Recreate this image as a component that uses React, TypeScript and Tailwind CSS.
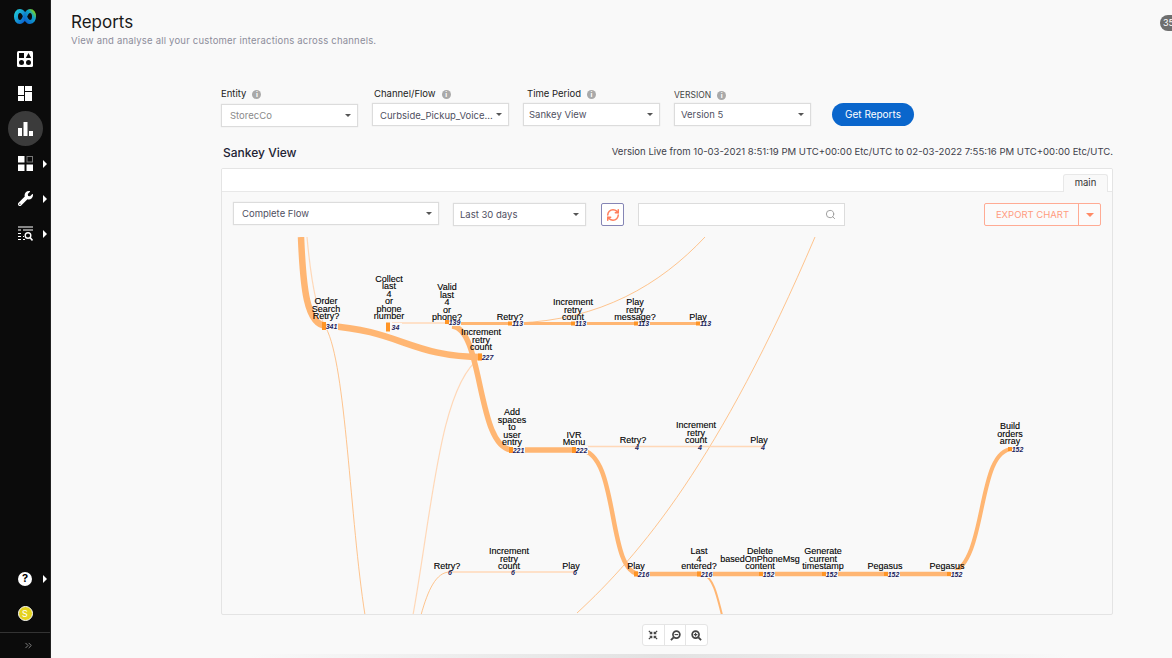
import { ChevronsRight, RefreshCw, Search } from 'lucide-react';
import { FaWrench } from 'react-icons/fa';

const sans = 'font-["Inter",sans-serif]';

function Caret({ className = 'border-t-[#555]' }: { className?: string }) {
  return <span className={`h-0 w-0 shrink-0 border-x-[3px] border-t-[3px] border-x-transparent ${className}`} />;
}

function Info() {
  return (
    <span className="flex h-[9px] w-[9px] items-center justify-center rounded-full bg-[#a9a9a9] text-[7px] font-bold leading-none text-white">
      i
    </span>
  );
}

function Select({ value, className, muted, textClass = '' }: { value: string; className: string; muted?: boolean; textClass?: string }) {
  return (
    <div
      className={`flex h-[23px] items-center justify-between border border-[#dcdcdc] bg-white pr-[6px] text-[9.5px] shadow-[0_0_1px_#ddd] ${muted ? 'text-[#8a8a8a]' : 'text-[#50505f]'} ${className}`}
    >
      <span className={`whitespace-nowrap ${textClass}`}>{value}</span>
      <Caret />
    </div>
  );
}

function Filter(props: { label: string; value: string; muted?: boolean; upper?: boolean; labelPad: string; textPad: string; textClass?: string }) {
  const { label, value, muted, upper, labelPad, textPad, textClass } = props;
  return (
    <div className="w-[137px]">
      <div className={`mb-[3px] flex h-[12px] items-center gap-[6px] ${labelPad} ${upper ? 'translate-y-[1px] text-[8.5px] text-[#444]' : 'text-[9.5px] text-[#222]'}`}>
        {label}
        <Info />
      </div>
      <Select value={value} muted={muted} textClass={textClass} className={`w-[137px] ${textPad}`} />
    </div>
  );
}

function SideItem({ children, arrow, active }: { children: React.ReactNode; arrow?: boolean; active?: boolean }) {
  return (
    <div className="relative flex h-[35px] w-full items-center justify-center">
      <div className={`flex h-[35px] w-[35px] items-center justify-center rounded-full ${active ? 'bg-[#3b3b3b]' : ''}`}>
        {children}
      </div>
      {arrow && (
        <span className="absolute left-[43px] h-0 w-0 border-y-[4px] border-l-[4px] border-y-transparent border-l-white" />
      )}
    </div>
  );
}

type SankeyNode = { lines: string[]; cx: number; lastY: number; mx: number; my: number; count: string; h?: number };

const nodes: SankeyNode[] = [
  { lines: ['Order', 'Search', 'Retry?'], cx: 326, lastY: 319, mx: 322, my: 326, count: '341', h: 7 },
  { lines: ['Collect', 'last', '4', 'or', 'phone', 'number'], cx: 389, lastY: 319, mx: 386, my: 327, count: '34', h: 8 },
  { lines: ['Valid', 'last', '4', 'or', 'phone?'], cx: 447, lastY: 320, mx: 445, my: 322, count: '139', h: 3 },
  { lines: ['Retry?'], cx: 510, lastY: 320, mx: 508, my: 323.5, count: '113', h: 3 },
  { lines: ['Increment', 'retry', 'count'], cx: 573, lastY: 320, mx: 571, my: 323.5, count: '113', h: 3 },
  { lines: ['Play', 'retry', 'message?'], cx: 635, lastY: 320, mx: 634, my: 323.5, count: '113', h: 3 },
  { lines: ['Play'], cx: 698, lastY: 320, mx: 696, my: 323.5, count: '113', h: 3 },
  { lines: ['Increment', 'retry', 'count'], cx: 481, lastY: 350, mx: 478, my: 357, count: '227', h: 6 },
  { lines: ['Add', 'spaces', 'to', 'user', 'entry'], cx: 512, lastY: 445, mx: 509, my: 450, count: '221', h: 5 },
  { lines: ['IVR', 'Menu'], cx: 574, lastY: 445, mx: 572, my: 450, count: '222', h: 5 },
  { lines: ['Retry?'], cx: 633, lastY: 443, mx: 637, my: 447, count: '4' },
  { lines: ['Increment', 'retry', 'count'], cx: 696, lastY: 443, mx: 700, my: 447, count: '4' },
  { lines: ['Play'], cx: 759, lastY: 443, mx: 763, my: 447, count: '4' },
  { lines: ['Retry?'], cx: 447, lastY: 569, mx: 450, my: 572, count: '6' },
  { lines: ['Increment', 'retry', 'count'], cx: 509, lastY: 569, mx: 513, my: 572, count: '6' },
  { lines: ['Play'], cx: 571, lastY: 569, mx: 575, my: 572, count: '6' },
  { lines: ['Play'], cx: 636, lastY: 569, mx: 634, my: 574, count: '216', h: 4 },
  { lines: ['Last', '4', 'entered?'], cx: 699, lastY: 569, mx: 697, my: 574, count: '216', h: 4 },
  { lines: ['Delete', 'basedOnPhoneMsg', 'content'], cx: 760, lastY: 569, mx: 759, my: 574, count: '152', h: 3 },
  { lines: ['Generate', 'current', 'timestamp'], cx: 823, lastY: 569, mx: 822, my: 574, count: '152', h: 3 },
  { lines: ['Pegasus'], cx: 885, lastY: 569, mx: 884, my: 574, count: '152', h: 3 },
  { lines: ['Pegasus'], cx: 947, lastY: 569, mx: 947, my: 574, count: '152', h: 3 },
  { lines: ['Build', 'orders', 'array'], cx: 1010, lastY: 444, mx: 1008, my: 449, count: '152', h: 3 },
];

const thin = '#ffd8b8';
const mid = '#ffb673';

function Sankey() {
  return (
    <svg viewBox="222 237 889 378" className="block h-[378px] w-[889px]" fill="none">
      {/* thin links */}
      <path d="M307 237 C310 270 316 310 325 326" stroke={thin} strokeWidth="1.2" />
      <path d="M326 328 C346 365 350 520 365 615" stroke={mid} strokeWidth="1" opacity="0.8" />
      <path d="M480 358 C440 385 432 510 413 615" stroke={thin} strokeWidth="1.2" />
      <path d="M421 615 C428 590 436 572 450 572" stroke={mid} strokeWidth="1" opacity="0.8" />
      <path d="M577 613 C640 555 720 460 815 237" stroke={mid} strokeWidth="1" opacity="0.8" />
      <path d="M517 323 C600 320 660 285 705 237" stroke={mid} strokeWidth="1" opacity="0.8" />
      <path d="M392 323 H450" stroke={thin} strokeWidth="1.4" />
      <path d="M582 446.5 H763" stroke={thin} strokeWidth="1.4" />
      <path d="M450 572 H575" stroke={thin} strokeWidth="1.4" />
      {/* thick links */}
      <path d="M301 237 C303 285 306 326 327 326 C400 330 410 357 483 357" stroke={mid} strokeWidth="6.5" />
      <path d="M452 326 C484 328 476 450 513 450 H576" stroke={mid} strokeWidth="5.5" />
      <path d="M452 323.5 H700" stroke={mid} strokeWidth="3" />
      <path d="M580 450 C620 452 606 574 640 574 H950" stroke={mid} strokeWidth="4.5" />
      <path d="M952 573 C988 560 976 449 1013 449" stroke={mid} strokeWidth="4" />
      <path d="M704 575 C714 578 718 600 722 615" stroke={mid} strokeWidth="2" />
      {nodes.map((n, i) => (
        <g key={i}>
          {n.h && (
            <>
              <rect x={n.mx + 4} y={n.my - 4} width="12" height="8" fill="#f9f9f9" />
              <rect x={n.mx} y={n.my - n.h / 2 - 0.5} width="4" height={n.h + 1} fill="#ff9526" />
            </>
          )}
          <text
            x={n.mx + (n.h ? 9.5 : 0)}
            y={n.my + 2.5}
            textAnchor="middle"
            fontSize="7"
            fontWeight="700"
            fontStyle="italic"
            fill="#1c2460"
            fontFamily="'Liberation Sans', sans-serif"
          >
            {n.count}
          </text>
          <text textAnchor="middle" fontSize="9" fill="#000" stroke="#000" strokeWidth="0.12" fontFamily="'Liberation Sans', sans-serif">
            {n.lines.map((l, j) => (
              <tspan key={j} x={n.cx} y={n.lastY - (n.lines.length - 1 - j) * 7.4}>
                {l}
              </tspan>
            ))}
          </text>
        </g>
      ))}
    </svg>
  );
}

export default function App() {
  return (
    <div className={`relative flex h-[658px] w-[1172px] overflow-hidden bg-[#f9f9f9] ${sans}`}>
      {/* Sidebar */}
      <aside className="flex h-full w-[51px] shrink-0 flex-col items-center border-r border-[#222] bg-[#0b0b0b]">
        <svg viewBox="0 0 22 15" className="mt-[9px] mb-[17px] h-[15px] w-[22px] shrink-0" fill="none" strokeWidth="4">
          <defs>
            <linearGradient id="wl" x1="0" y1="0" x2="1" y2="1">
              <stop offset="0" stopColor="#1fc8d8" />
              <stop offset="1" stopColor="#0a5fd0" />
            </linearGradient>
            <linearGradient id="wr" x1="0" y1="1" x2="1" y2="0">
              <stop offset="0" stopColor="#0a5fd0" />
              <stop offset="0.7" stopColor="#12a5c8" />
              <stop offset="1" stopColor="#7ed321" />
            </linearGradient>
          </defs>
          <path d="M11 7.5 C9.5 3 8 2 6 2 C3.5 2 2 4.5 2 7.5 C2 10.8 3.5 13 6 13 C8.5 13 9.8 10.5 11 7.5" stroke="url(#wl)" />
          <path d="M11 7.5 C12.2 4.5 13.5 2 16 2 C18.5 2 20 4.2 20 7.5 C20 10.5 18.5 13 16 13 C14 13 12.5 12 11 7.5" stroke="url(#wr)" />
        </svg>
        <SideItem>
          <svg viewBox="0 0 16 16" className="h-[16px] w-[16px]">
            <rect width="16" height="16" rx="1.5" fill="#fff" />
            <rect x="2" y="2" width="5" height="5" fill="#0b0b0b" />
            <path d="M11.5 2 L14.2 7 H8.8 Z" fill="#0b0b0b" />
            <circle cx="4.5" cy="11.5" r="2.5" fill="#0b0b0b" />
            <circle cx="11.5" cy="11.5" r="2.5" fill="#0b0b0b" />
          </svg>
        </SideItem>
        <SideItem>
          <svg viewBox="0 0 14 15" className="h-[15px] w-[14px]" fill="#fff">
            <rect width="6" height="9" />
            <rect x="7" width="7" height="5" />
            <rect y="10" width="6" height="5" />
            <rect x="7" y="6" width="7" height="9" />
          </svg>
        </SideItem>
        <SideItem active>
          <svg viewBox="0 0 15 14" className="h-[14px] w-[15px]" fill="#fff">
            <rect y="6" width="4" height="8" />
            <rect x="5.5" width="4" height="14" />
            <rect x="11" y="9" width="4" height="5" />
          </svg>
        </SideItem>
        <SideItem arrow>
          <svg viewBox="0 0 15 15" className="h-[15px] w-[15px]" fill="#fff">
            <rect width="6.5" height="6.5" />
            <rect x="9" y="0.5" width="5.5" height="5.5" fill="none" stroke="#777" />
            <rect y="8.5" width="6.5" height="6.5" />
            <rect x="8.5" y="8.5" width="6.5" height="6.5" />
          </svg>
        </SideItem>
        <SideItem arrow>
          <FaWrench className="h-[15px] w-[15px] text-white" />
        </SideItem>
        <SideItem arrow>
          <svg viewBox="0 0 15 15" className="h-[15px] w-[15px]" stroke="#fff" fill="none" strokeWidth="1.1">
            <path d="M0 1 H15 M5 4 H15 M0 4 H3 M0 7.5 H3 M0 10.5 H3 M0 13.5 H3 M5 10.5 H6 M5 13.5 H7" />
            <circle cx="10" cy="9.5" r="2.8" strokeWidth="1.4" />
            <path d="M12 11.5 L14.5 14.5" strokeWidth="1.6" />
          </svg>
        </SideItem>
        <div className="mt-auto flex w-full flex-col items-center">
          <SideItem arrow>
            <span className="flex h-[14px] w-[14px] items-center justify-center rounded-full bg-white text-[11px] font-bold leading-none text-black">
              ?
            </span>
          </SideItem>
          <SideItem>
            <span className="flex h-[15px] w-[15px] items-center justify-center rounded-full border border-white bg-[#e5d21f] text-[9px] leading-none text-white">
              S
            </span>
          </SideItem>
          <div className="mt-[1px] flex h-[26px] w-full items-center justify-center border-t border-[#333] pl-[6px]">
            <ChevronsRight className="h-[11px] w-[11px] text-[#8a8a8a]" />
          </div>
        </div>
      </aside>

      {/* Main */}
      <main className="flex min-w-0 flex-1 flex-col">
        <header className="pl-[20px] pt-[12px]">
          <h1 className="text-[17px] leading-[21px] text-[#1a1a1a]">Reports</h1>
          <p className="mt-[2px] text-[9.5px] leading-[12px] tracking-[0.2px] text-[#8d8d9b]">
            View and analyse all your customer interactions across channels.
          </p>
        </header>

        <div className="ml-[170px] mt-[41px] w-[892px]">
          <div className="flex items-end gap-[14px]">
            <div className="translate-y-[1px]">
              <Filter label="Entity" value="StorecCo" muted labelPad="-translate-y-[1px]" textPad="pl-[8px]" textClass="pt-[1px]" />
            </div>
            <Filter label="Channel/Flow" value="Curbside_Pickup_Voice..." labelPad="pl-[2px]" textPad="pl-[7px]" textClass="pt-[3px]" />
            <Filter label="Time Period" value="Sankey View" labelPad="pl-[4px]" textPad="pl-[5px]" textClass="pt-[1px]" />
            <Filter label="VERSION" value="Version 5" upper labelPad="" textPad="pl-[6px]" textClass="pt-[1px]" />
            <button className="ml-[7px] h-[23px] w-[82px] rounded-full bg-[#0a66cc] text-[10px] text-white">
              Get Reports
            </button>
          </div>

          <div className="mt-[19px] flex h-[15px] items-center justify-between pl-[2px]">
            <h2 className="text-[12px] font-medium text-[#222233]">Sankey View</h2>
            <span className="text-[9.55px] text-[#3e3e4a]">
              Version Live from 10-03-2021 8:51:19 PM UTC+00:00 Etc/UTC to 02-03-2022 7:55:16 PM UTC+00:00 Etc/UTC.
            </span>
          </div>

          {/* Card */}
          <div className="mt-[8px] h-[447px] w-[892px] overflow-hidden rounded-[2px] border border-[#e4e4e4]">
            <div className="flex h-[23px] items-end justify-end border-b border-[#e8e8e8] bg-white pr-[4px]">
              <div className="-mb-px flex h-[18px] w-[45px] items-center justify-center rounded-t-[3px] border border-b-0 border-[#e8e8e8] bg-[#f9f9f9] text-[9.5px] text-[#333]">
                main
              </div>
            </div>
            <div className="flex h-[45px] items-start px-[11px] pt-[10px]">
              <Select value="Complete Flow" className="w-[206px] pl-[8px]" textClass="pt-[1px]" />
              <Select value="Last 30 days" className="ml-[14px] mt-[1px] w-[133px] pl-[6px]" textClass="pt-[2px]" />
              <div className="ml-[15px] mt-[1px] flex h-[23px] w-[23px] items-center justify-center rounded-[2px] border-[1.5px] border-[#8585b5] bg-white">
                <RefreshCw strokeWidth={2.6} className="h-[14px] w-[14px] text-[#ff7f5c]" />
              </div>
              <div className="ml-[14px] mt-[1px] flex h-[23px] w-[207px] items-center justify-end border border-[#dcdcdc] bg-white pr-[8px]">
                <Search className="h-[11px] w-[11px] text-[#999]" />
              </div>
              <div className="ml-auto mt-[1px] flex h-[23px] w-[117px] rounded-[2px] border border-[#ffab94] bg-[#fbfbfb] text-[9.5px] text-[#ff9c80]">
                <span className="flex flex-1 items-center justify-center border-r border-[#ffab94] pl-[2px] pt-[1px]">EXPORT CHART</span>
                <span className="flex w-[21px] items-center justify-center">
                  <span className="h-0 w-0 border-x-[4px] border-t-[4px] border-x-transparent border-t-[#ff8a66]" />
                </span>
              </div>
            </div>
            <Sankey />
          </div>

          {/* Zoom controls */}
          <div className="mx-auto mt-[9px] flex h-[22px] w-[66px] translate-x-[8px] divide-x divide-[#e5e5e5] rounded-[3px] border border-[#e5e5e5] bg-white">
            <span className="flex flex-1 items-center justify-center">
              <svg viewBox="0 0 12 12" className="h-[10px] w-[10px]" stroke="#444" strokeWidth="1.4" fill="none">
                <path d="M1 1 L4.5 4.5 M4.5 2 V4.5 H2 M11 1 L7.5 4.5 M7.5 2 V4.5 H10 M1 11 L4.5 7.5 M4.5 10 V7.5 H2 M11 11 L7.5 7.5 M7.5 10 V7.5 H10" />
              </svg>
            </span>
            <span className="flex flex-1 items-center justify-center">
              <svg viewBox="0 0 12 12" className="h-[11px] w-[11px]" stroke="#444" fill="none">
                <circle cx="7" cy="5" r="3.8" strokeWidth="1.8" />
                <path d="M5 5 H9" strokeWidth="1.2" />
                <path d="M4 8 L1 11" strokeWidth="2" />
              </svg>
            </span>
            <span className="flex flex-1 items-center justify-center">
              <svg viewBox="0 0 12 12" className="h-[11px] w-[11px]" stroke="#444" fill="none">
                <circle cx="5" cy="5" r="3.8" strokeWidth="1.8" />
                <path d="M3 5 H7 M5 3 V7" strokeWidth="1.2" />
                <path d="M8 8 L11 11" strokeWidth="2" />
              </svg>
            </span>
          </div>
        </div>
      </main>

      {/* Top right badge */}
      <div className="absolute left-[1160px] top-[15px] flex h-[16px] w-[24px] items-center rounded-l-full bg-[#6e6e6e] pl-[3px] text-[9px] text-white">
        35
      </div>
      {/* Bottom edge shadow */}
      <div className="absolute bottom-0 left-[250px] h-[4px] w-[820px] bg-gradient-to-r from-[#f9f9f9] via-[#e2e2e2] to-[#f9f9f9]" />
    </div>
  );
}
